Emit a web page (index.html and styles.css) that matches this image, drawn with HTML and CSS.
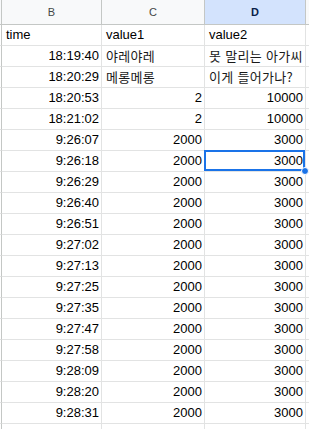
FILE: index.html
```html
<!DOCTYPE html>
<html lang="ko">
<head>
<meta charset="utf-8">
<title>Sheet</title>
<link rel="stylesheet" href="styles.css">
</head>
<body>
<div class="sheet">
  <div class="row head">
    <div class="c a"></div>
    <div class="c b">B</div>
    <div class="c cc">C</div>
    <div class="c d active">D</div>
    <div class="c e"></div>
  </div>
  <div class="row"><div class="c a"></div><div class="c b">time</div><div class="c cc">value1</div><div class="c d">value2</div><div class="c e"></div></div>
  <div class="row"><div class="c a"></div><div class="c b r">18:19:40</div><div class="c cc kr">야레야레</div><div class="c d kr">못 말리는 아가씨</div><div class="c e"></div></div>
  <div class="row"><div class="c a"></div><div class="c b r">18:20:29</div><div class="c cc kr">메롱메롱</div><div class="c d kr">이게 들어가나?</div><div class="c e"></div></div>
  <div class="row"><div class="c a"></div><div class="c b r">18:20:53</div><div class="c cc r">2</div><div class="c d r">10000</div><div class="c e"></div></div>
  <div class="row"><div class="c a"></div><div class="c b r">18:21:02</div><div class="c cc r">2</div><div class="c d r">10000</div><div class="c e"></div></div>
  <div class="row"><div class="c a"></div><div class="c b r">9:26:07</div><div class="c cc r">2000</div><div class="c d r">3000</div><div class="c e"></div></div>
  <div class="row"><div class="c a"></div><div class="c b r">9:26:18</div><div class="c cc r">2000</div><div class="c d r sel">3000</div><div class="c e"></div></div>
  <div class="row"><div class="c a"></div><div class="c b r">9:26:29</div><div class="c cc r">2000</div><div class="c d r">3000</div><div class="c e"></div></div>
  <div class="row"><div class="c a"></div><div class="c b r">9:26:40</div><div class="c cc r">2000</div><div class="c d r">3000</div><div class="c e"></div></div>
  <div class="row"><div class="c a"></div><div class="c b r">9:26:51</div><div class="c cc r">2000</div><div class="c d r">3000</div><div class="c e"></div></div>
  <div class="row"><div class="c a"></div><div class="c b r">9:27:02</div><div class="c cc r">2000</div><div class="c d r">3000</div><div class="c e"></div></div>
  <div class="row"><div class="c a"></div><div class="c b r">9:27:13</div><div class="c cc r">2000</div><div class="c d r">3000</div><div class="c e"></div></div>
  <div class="row"><div class="c a"></div><div class="c b r">9:27:25</div><div class="c cc r">2000</div><div class="c d r">3000</div><div class="c e"></div></div>
  <div class="row"><div class="c a"></div><div class="c b r">9:27:35</div><div class="c cc r">2000</div><div class="c d r">3000</div><div class="c e"></div></div>
  <div class="row"><div class="c a"></div><div class="c b r">9:27:47</div><div class="c cc r">2000</div><div class="c d r">3000</div><div class="c e"></div></div>
  <div class="row"><div class="c a"></div><div class="c b r">9:27:58</div><div class="c cc r">2000</div><div class="c d r">3000</div><div class="c e"></div></div>
  <div class="row"><div class="c a"></div><div class="c b r">9:28:09</div><div class="c cc r">2000</div><div class="c d r">3000</div><div class="c e"></div></div>
  <div class="row"><div class="c a"></div><div class="c b r">9:28:20</div><div class="c cc r">2000</div><div class="c d r">3000</div><div class="c e"></div></div>
  <div class="row"><div class="c a"></div><div class="c b r">9:28:31</div><div class="c cc r">2000</div><div class="c d r">3000</div><div class="c e"></div></div>
  <div class="row"><div class="c a"></div><div class="c b"></div><div class="c cc"></div><div class="c d"></div><div class="c e"></div></div>
</div>
</body>
</html>
```

FILE: styles.css
```css
html, body {
  margin: 0;
  padding: 0;
  background: #ffffff;
  overflow: hidden;
}
.sheet {
  width: 309px;
  font-family: "Liberation Sans", Arial, "Noto Sans CJK KR", sans-serif;
  font-size: 13px;
  color: #000000;
}
.row {
  display: flex;
  height: 21px;
}
.c {
  box-sizing: border-box;
  height: 100%;
  border-right: 1px solid #e2e3e3;
  border-bottom: 1px solid #e2e3e3;
  padding: 0 2px 0 4px;
  line-height: 20px;
  white-space: nowrap;
  overflow: hidden;
  flex: none;
}
.a { width: 2px; padding: 0; border-right-color: #c4c7c5; }
.b { width: 100px; }
.cc { width: 103px; }
.d { width: 101px; }
.e { flex: 1 1 auto; border-right: 0; padding: 0; }
.r { text-align: right; }
.kr { font-family: "Noto Sans CJK KR", sans-serif; font-size: 13px; letter-spacing: 0.3px; color: #1a1a1a; }

.head {
  height: 25px;
}
.head .c {
  background: #f8f9fa;
  border-right-color: #c4c7c5;
  border-bottom-color: #c4c7c5;
  text-align: center;
  line-height: 24px;
  font-size: 11px;
  color: #444746;
  padding: 0;
}
.head .active {
  background: #d3e3fd;
  color: #0b1f48;
  font-weight: bold;
}

.sel {
  position: relative;
  overflow: visible;
}
.sel::after {
  content: "";
  position: absolute;
  left: -1px;
  top: -1px;
  right: 0;
  bottom: 0;
  border: 2px solid #1a73e8;
}
.sel::before {
  content: "";
  position: absolute;
  right: -4px;
  bottom: -4px;
  width: 6px;
  height: 6px;
  border-radius: 50%;
  background: #1a73e8;
  border: 1px solid #ffffff;
  z-index: 2;
}
```
